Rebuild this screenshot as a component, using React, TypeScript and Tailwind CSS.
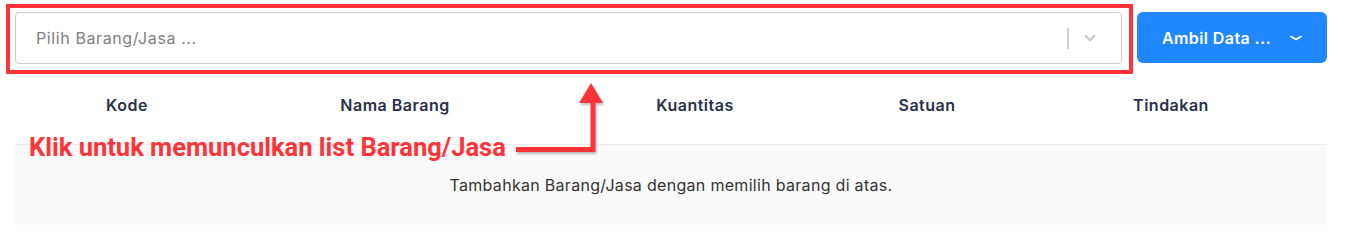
import { ChevronDown } from 'lucide-react'

const columns = [
  { label: 'Kode', w: 'w-[224px]' },
  { label: 'Nama Barang', w: 'w-[312px]' },
  { label: 'Kuantitas', w: 'w-[288px]' },
  { label: 'Satuan', w: 'w-[176px]' },
  { label: 'Tindakan', w: 'w-[312px]' },
]

export default function App() {
  return (
    <div className="relative min-h-[241px] bg-white pl-[15px] pr-[22px] pt-[12px] font-['Inter',sans-serif]">
      {/* Select + button */}
      <div className="flex gap-[15px]">
        <div className="flex h-[52px] flex-1 items-center rounded-[4px] border border-[#cccccc] bg-white pl-[20px] pr-[22px]">
          <span className="flex-1 text-[16px] tracking-[0.6px] text-[#808080]">Pilih Barang/Jasa ...</span>
          <span className="h-[21px] w-[2px] bg-[#d0d0d0]" />
          <ChevronDown className="ml-[12px] h-[18px] w-[18px] text-[#c8c8c8]" strokeWidth={2.6} />
        </div>
        <button className="flex h-[51px] w-[190px] items-center justify-between rounded-[6px] bg-[#1f87ff] pl-[25px] pr-[24px] text-[16px] font-semibold tracking-[0.4px] text-white">
          Ambil Data ...
          <svg className="h-[10px] w-[14px]" viewBox="0 0 14 10" fill="none" stroke="currentColor" strokeWidth={1.6}>
            <path d="M2 3.5 7 6.5 12 3.5" strokeLinecap="round" strokeLinejoin="round" />
          </svg>
        </button>
      </div>

      {/* Table */}
      <div className="w-[1312px]">
        <div className="flex h-[80px] items-center">
          {columns.map((c) => (
            <div key={c.label} className={`${c.w} pt-[2px] text-center text-[16px] font-semibold tracking-[0.5px] text-[#2a3147]`}>
              {c.label}
            </div>
          ))}
        </div>
        <div className="flex h-[81px] items-center justify-center border-t border-[#ececec] bg-[#fafafa] text-[16px] tracking-[0.3px] text-[#333333]">
          Tambahkan Barang/Jasa dengan memilih barang di atas.
        </div>
      </div>

      {/* Annotation overlay */}
      <div className="pointer-events-none absolute left-[6px] top-[4px] h-[70px] w-[1127px] border-4 border-[#ff3338]" />
      <span className="absolute left-[29px] top-[131px] font-['Roboto',sans-serif] text-[25.5px] font-bold leading-[32px] text-[#ff3338]">
        Klik untuk memunculkan list Barang/Jasa
      </span>
      <svg className="absolute left-[510px] top-[80px] h-[80px] w-[100px] drop-shadow-[1px_2px_1px_rgba(0,0,0,0.25)]" viewBox="0 0 100 80" fill="none">
        <path d="M6 69.5H83V22" stroke="#ff3338" strokeWidth={5} />
        <path d="M81 3 93 23H69Z" fill="#ff3338" />
      </svg>
    </div>
  )
}
